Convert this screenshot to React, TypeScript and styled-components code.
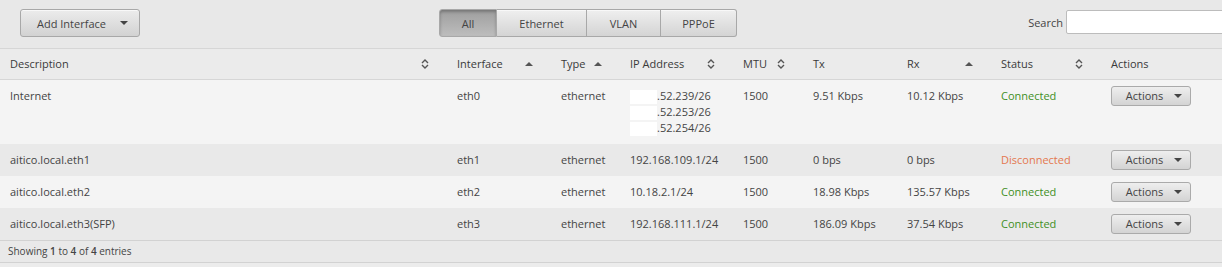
import styled, {createGlobalStyle} from 'styled-components';

const GlobalStyle = createGlobalStyle`
  html, body {
    margin: 0;
    padding: 0;
    background: #ececec;
    font-family: 'Open Sans', 'Liberation Sans', sans-serif;
    font-size: 11px;
    color: #444;
  }
`;

const Page = styled.div`
  width: 1222px;
  overflow: hidden;
`;

const Toolbar = styled.div`
  height: 49px;
  box-sizing: border-box;
  display: grid;
  grid-template-columns: 419px auto 1fr;
  align-items: start;
  padding: 9px 0 0 20px;
  background: #e8e8e8;
  border-bottom: 1px solid #d6d6d6;
`;

const Caret = styled.span`
  display: inline-block;
  width: 0;
  height: 0;
  border-left: 4px solid transparent;
  border-right: 4px solid transparent;
  border-top: 4px solid #444;
`;

const DropButton = styled.button`
  justify-self: start;
  display: flex;
  align-items: center;
  gap: 14px;
  width: 120px;
  height: 28px;
  padding: 0 0 0 16px;
  white-space: nowrap;
  font-family: inherit;
  font-size: 11px;
  color: #444;
  border: 1px solid #a8a8a8;
  border-radius: 3px;
  background: linear-gradient(#ececec, #d2d2d2);
  box-shadow: inset 0 1px 0 #f8f8f8;
`;

const Segments = styled.div`
  display: flex;
`;

const Segment = styled.button<{ $active?: boolean; $w: number }>`
  width: ${p => p.$w}px;
  height: 28px;
  font-family: inherit;
  font-size: 11px;
  color: #444;
  border: 1px solid #a8a8a8;
  border-left-width: 0;
  background: ${p => p.$active ? 'linear-gradient(#9e9e9e, #bdbdbd)' : 'linear-gradient(#efefef, #d4d4d4)'};
  box-shadow: ${p => p.$active ? 'inset 0 2px 3px rgba(0,0,0,0.25)' : 'inset 0 1px 0 #f8f8f8'};
  &:first-child {
    border-left-width: 1px;
    border-radius: 3px 0 0 3px;
  }
  &:last-child {
    border-radius: 0 3px 3px 0;
  }
`;

const SearchBox = styled.label`
  justify-self: end;
  display: flex;
  align-items: center;
  gap: 3px;
  margin: 1px -10px 0 0;
`;

const SearchInput = styled.input`
  width: 164px;
  height: 22px;
  border: 1px solid #bcbcbc;
  border-radius: 2px;
  background: #fff;
  padding: 0;
`;

const Table = styled.table`
  width: 1222px;
  border-collapse: collapse;
  table-layout: fixed;
`;

const HeadCell = styled.th<{ $w: number }>`
  width: ${p => p.$w}px;
  height: 30px;
  padding: 0 18px 0 10px;
  text-align: left;
  font-weight: normal;
  color: #3a3a3a;
  background: #ebebeb;
  border-bottom: 1px solid #d6d6d6;
  box-sizing: border-box;
`;

const HeadInner = styled.div`
  display: flex;
  align-items: center;
  justify-content: space-between;
`;

const Row = styled.tr<{ $odd: boolean }>`
  background: ${p => p.$odd ? '#f4f4f4' : '#e9e9e9'};
`;

const Cell = styled.td`
  padding: 8px 10px;
  line-height: 16px;
  vertical-align: top;
  white-space: nowrap;
`;

const Status = styled.span<{ $ok: boolean }>`
  color: ${p => p.$ok ? '#3f8f24' : '#e4784f'};
`;

const ActionButton = styled.button`
  display: flex;
  align-items: center;
  justify-content: center;
  gap: 11px;
  width: 80px;
  height: 20px;
  margin: -2px 0;
  padding: 0 0 0 6px;
  font-family: inherit;
  font-size: 11px;
  color: #444;
  border: 1px solid #aaa;
  border-radius: 3px;
  background: linear-gradient(#eeeeee, #d3d3d3);
`;

const Mask = styled.span`
  display: inline-block;
  width: 27px;
  height: 14px;
  vertical-align: middle;
  background: #fff;
`;

const Footer = styled.div`
  height: 21px;
  display: flex;
  align-items: center;
  padding-left: 8px;
  font-size: 10px;
  background: #e9e9e9;
  border-top: 1px solid #d2d2d2;
  border-bottom: 1px solid #d2d2d2;
  b {
    font-weight: 600;
  }
`;

const Both = () => (
  <svg width="8" height="10" viewBox="0 0 8 10">
    <path d="M1 4 L4 1 L7 4 M1 6 L4 9 L7 6" fill="none" stroke="#555" strokeWidth="1.4"/>
  </svg>
);

const Up = () => (
  <svg width="8" height="6" viewBox="0 0 8 6">
    <path d="M0 5 L4 1 L8 5 Z" fill="#555"/>
  </svg>
);

type Sort = 'both' | 'up' | null;

const columns: { label: string; w: number; sort: Sort }[] = [
  {label: 'Description', w: 447, sort: 'both'},
  {label: 'Interface', w: 104, sort: 'up'},
  {label: 'Type', w: 69, sort: 'up'},
  {label: 'IP Address', w: 113, sort: 'both'},
  {label: 'MTU', w: 70, sort: 'both'},
  {label: 'Tx', w: 94, sort: null},
  {label: 'Rx', w: 94, sort: 'up'},
  {label: 'Status', w: 110, sort: 'both'},
  {label: 'Actions', w: 121, sort: null},
];

const rows = [
  {desc: 'Internet', iface: 'eth0', ip: ['.52.239/26', '.52.253/26', '.52.254/26'], tx: '9.51 Kbps', rx: '10.12 Kbps', ok: true},
  {desc: 'aitico.local.eth1', iface: 'eth1', ip: ['192.168.109.1/24'], tx: '0 bps', rx: '0 bps', ok: false},
  {desc: 'aitico.local.eth2', iface: 'eth2', ip: ['10.18.2.1/24'], tx: '18.98 Kbps', rx: '135.57 Kbps', ok: true},
  {desc: 'aitico.local.eth3(SFP)', iface: 'eth3', ip: ['192.168.111.1/24'], tx: '186.09 Kbps', rx: '37.54 Kbps', ok: true},
];

const App = () => (
  <Page>
    <GlobalStyle/>
    <Toolbar>
      <DropButton>Add Interface <Caret/></DropButton>
      <Segments>
        <Segment $active $w={58}>All</Segment>
        <Segment $w={90}>Ethernet</Segment>
        <Segment $w={74}>VLAN</Segment>
        <Segment $w={76}>PPPoE</Segment>
      </Segments>
      <SearchBox>Search <SearchInput/></SearchBox>
    </Toolbar>
    <Table>
      <thead>
      <tr>
        {columns.map(c =>
          <HeadCell key={c.label} $w={c.w}>
            <HeadInner>
              <span>{c.label}</span>
              {c.sort === 'both' && <Both/>}
              {c.sort === 'up' && <Up/>}
            </HeadInner>
          </HeadCell>)}
      </tr>
      </thead>
      <tbody>
      {rows.map((r, i) =>
        <Row key={r.iface} $odd={i % 2 === 0}>
          <Cell>{r.desc}</Cell>
          <Cell>{r.iface}</Cell>
          <Cell>ethernet</Cell>
          <Cell>
            {r.ip.map(ip =>
              <div key={ip}>{i === 0 && <Mask/>}{ip}</div>)}
          </Cell>
          <Cell>1500</Cell>
          <Cell>{r.tx}</Cell>
          <Cell>{r.rx}</Cell>
          <Cell><Status $ok={r.ok}>{r.ok ? 'Connected' : 'Disconnected'}</Status></Cell>
          <Cell><ActionButton>Actions <Caret/></ActionButton></Cell>
        </Row>)}
      </tbody>
    </Table>
    <Footer>Showing&nbsp;<b>1</b>&nbsp;to&nbsp;<b>4</b>&nbsp;of&nbsp;<b>4</b>&nbsp;entries</Footer>
  </Page>
);

export default App;
